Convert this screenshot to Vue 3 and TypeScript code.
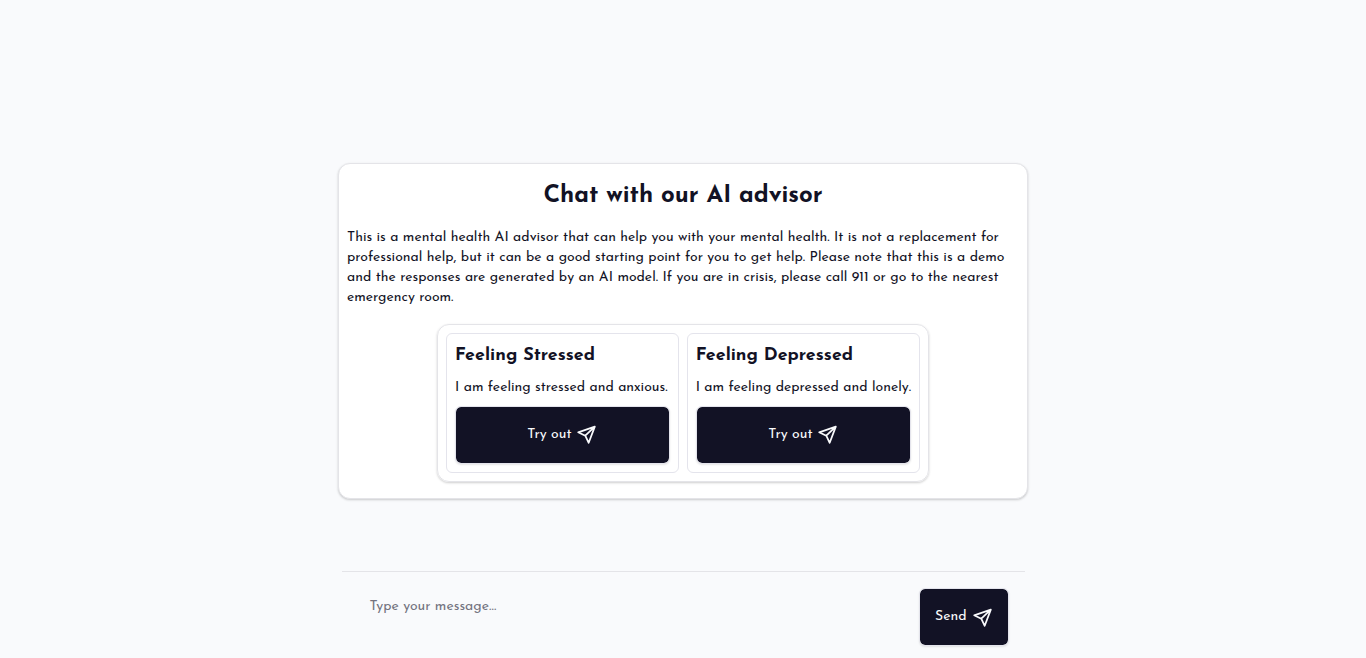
<script setup lang="ts">
import { ref } from 'vue'

interface Suggestion {
  title: string
  message: string
}

const suggestions: Suggestion[] = [
  { title: 'Feeling Stressed', message: 'I am feeling stressed and anxious.' },
  { title: 'Feeling Depressed', message: 'I am feeling depressed and lonely.' },
]

const draft = ref('')

function tryOut(item: Suggestion) {
  draft.value = item.message
}

function send() {
  draft.value = ''
}
</script>

<template>
  <div class="page">
    <main class="content">
      <section class="intro">
        <h1>Chat with our AI advisor</h1>
        <p>
          This is a mental health AI advisor that can help you with your mental health. It is not a
          replacement for professional help, but it can be a good starting point for you to get help.
          Please note that this is a demo and the responses are generated by an AI model. If you are
          in crisis, please call 911 or go to the nearest emergency room.
        </p>
        <div class="suggestions">
          <article v-for="item in suggestions" :key="item.title" class="suggestion">
            <h2>{{ item.title }}</h2>
            <p>{{ item.message }}</p>
            <button type="button" class="button" @click="tryOut(item)">
              Try out
              <svg viewBox="0 0 24 24" aria-hidden="true">
                <path d="M21.5 3 L2.5 9.5 L10.6 13.4 L14.5 21.5 Z M21.5 3 L10.6 13.4" />
              </svg>
            </button>
          </article>
        </div>
      </section>
    </main>
    <form class="composer" @submit.prevent="send">
      <textarea v-model="draft" aria-label="Message" placeholder="Type your message…"></textarea>
      <button type="submit" class="button">
        Send
        <svg viewBox="0 0 24 24" aria-hidden="true">
          <path d="M21.5 3 L2.5 9.5 L10.6 13.4 L14.5 21.5 Z M21.5 3 L10.6 13.4" />
        </svg>
      </button>
    </form>
  </div>
</template>

<style>
body {
  background: #f9fafc;
}
</style>

<style scoped>
.page {
  box-sizing: border-box;
  min-height: 100vh;
  display: flex;
  flex-direction: column;
  align-items: center;
  padding: 90px 0 12px;
  color: #121225;
  font-family: "Josefin Sans", Lato, sans-serif;
  font-size: 14px;
  line-height: 20px;
}

.page *,
.page *::before {
  box-sizing: border-box;
}

h1,
h2,
p {
  margin: 0;
}

.content {
  flex: 1;
  display: flex;
  flex-direction: column;
  align-items: center;
  justify-content: center;
  width: 100%;
}

.intro {
  width: 100%;
  max-width: 690px;
  display: flex;
  flex-direction: column;
  align-items: center;
  gap: 16px;
  padding: 16px 8px;
  background: #fff;
  border: 1px solid #e4e4e8;
  border-radius: 12px;
  box-shadow: 0 1px 3px rgba(0, 0, 0, 0.1), 0 1px 2px rgba(0, 0, 0, 0.1);
}

h1 {
  font-size: 24px;
  line-height: 32px;
  font-weight: 700;
}

.suggestions {
  display: grid;
  grid-template-columns: repeat(2, 1fr);
  gap: 8px;
  width: 100%;
  max-width: 492px;
  padding: 8px;
  border: 1px solid #e4e4e8;
  border-radius: 12px;
  box-shadow: 0 1px 3px rgba(0, 0, 0, 0.1), 0 1px 2px rgba(0, 0, 0, 0.1);
}

.suggestion {
  display: flex;
  flex-direction: column;
  gap: 8px;
  padding: 8px;
  border: 1px solid #e4e4ec;
  border-radius: 6px;
}

.suggestion p {
  white-space: nowrap;
}

h2 {
  font-size: 18px;
  line-height: 28px;
  font-weight: 700;
}

.button {
  display: flex;
  align-items: center;
  justify-content: center;
  gap: 5px;
  height: 58px;
  padding: 0 15px;
  color: #f9fafc;
  background: #121225;
  background-clip: padding-box;
  border: 1px solid #e4e4ec;
  border-radius: 6px;
  box-shadow: 0 1px 2px rgba(0, 0, 0, 0.1);
  font: inherit;
  cursor: pointer;
}

.button svg {
  width: 21px;
  height: 21px;
  fill: none;
  stroke: currentColor;
  stroke-width: 2;
  stroke-linecap: round;
  stroke-linejoin: round;
}

.composer {
  display: flex;
  width: 50%;
  min-width: 320px;
  padding: 16px 16px 0;
  border-top: 1px solid #e4e4e8;
}

textarea {
  flex: 1;
  min-width: 0;
  height: 58px;
  padding: 9px 12px;
  color: inherit;
  background: transparent;
  border: 0;
  outline: none;
  resize: none;
  font: inherit;
}

textarea::placeholder {
  color: #73737f;
  opacity: 1;
}
</style>
